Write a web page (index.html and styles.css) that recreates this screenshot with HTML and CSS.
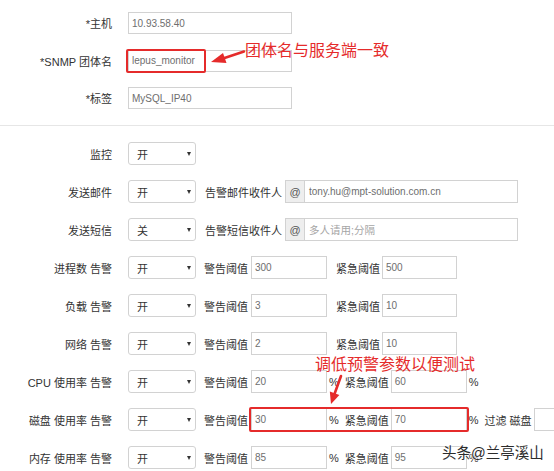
FILE: index.html
```html
<!DOCTYPE html>
<html lang="zh">
<head>
<meta charset="utf-8">
<title>SNMP 主机配置</title>
<link rel="stylesheet" href="styles.css">
</head>
<body>
<div class="page">
  <section class="basic">
    <div class="row">
      <div class="lbl">*主机</div>
      <div class="input w164">10.93.58.40</div>
    </div>
    <div class="row">
      <div class="lbl">*SNMP 团体名</div>
      <div class="input w164">lepus_monitor</div>
    </div>
    <div class="row">
      <div class="lbl">*标签</div>
      <div class="input w164">MySQL_IP40</div>
    </div>
  </section>

  <div class="sep"></div>

  <section class="alarms">
    <div class="row r">
      <div class="lbl">监控</div>
      <div class="select"><span>开</span><i class="caret"></i></div>
    </div>
    <div class="row r">
      <div class="lbl">发送邮件</div>
      <div class="select"><span>开</span><i class="caret"></i></div>
      <div class="sub mail">告警邮件收件人</div>
      <div class="addon">@</div>
      <div class="input wmail joined">tony.hu@mpt-solution.com.cn</div>
    </div>
    <div class="row r">
      <div class="lbl">发送短信</div>
      <div class="select"><span>关</span><i class="caret"></i></div>
      <div class="sub mail">告警短信收件人</div>
      <div class="addon">@</div>
      <div class="input wmail joined ph">多人请用;分隔</div>
    </div>
    <div class="row r">
      <div class="lbl">进程数 告警</div>
      <div class="select"><span>开</span><i class="caret"></i></div>
      <div class="sub warn">警告阈值</div>
      <div class="input w76">300</div>
      <div class="sub crit">紧急阈值</div>
      <div class="input w75">500</div>
    </div>
    <div class="row r">
      <div class="lbl">负载 告警</div>
      <div class="select"><span>开</span><i class="caret"></i></div>
      <div class="sub warn">警告阈值</div>
      <div class="input w76">3</div>
      <div class="sub crit">紧急阈值</div>
      <div class="input w75">10</div>
    </div>
    <div class="row r">
      <div class="lbl">网络 告警</div>
      <div class="select"><span>开</span><i class="caret"></i></div>
      <div class="sub warn">警告阈值</div>
      <div class="input w76">2</div>
      <div class="sub crit">紧急阈值</div>
      <div class="input w75">10</div>
    </div>
    <div class="row r">
      <div class="lbl">CPU 使用率 告警</div>
      <div class="select"><span>开</span><i class="caret"></i></div>
      <div class="sub warn">警告阈值</div>
      <div class="input w76">20</div>
      <div class="pct">%</div>
      <div class="sub crit2">紧急阈值</div>
      <div class="input w76">60</div>
      <div class="pct">%</div>
    </div>
    <div class="row r">
      <div class="lbl">磁盘 使用率 告警</div>
      <div class="select"><span>开</span><i class="caret"></i></div>
      <div class="sub warn">警告阈值</div>
      <div class="input w76">30</div>
      <div class="pct">%</div>
      <div class="sub crit2">紧急阈值</div>
      <div class="input w76">70</div>
      <div class="pct">%</div>
      <div class="sub filter">过滤 磁盘</div>
      <div class="input wrest"></div>
    </div>
    <div class="row r">
      <div class="lbl">内存 使用率 告警</div>
      <div class="select"><span>开</span><i class="caret"></i></div>
      <div class="sub warn">警告阈值</div>
      <div class="input w76">85</div>
      <div class="pct">%</div>
      <div class="sub crit2">紧急阈值</div>
      <div class="input w76">95</div>
      <div class="pct">%</div>
    </div>
  </section>

  <div class="mark box-snmp"></div>
  <div class="mark box-disk"></div>
  <div class="note note-snmp">团体名与服务端一致</div>
  <div class="note note-cpu">调低预警参数以便测试</div>
  <svg class="arrows" width="554" height="471" viewBox="0 0 554 471">
    <line x1="244" y1="51.5" x2="223" y2="58.5" stroke="#e52b2b" stroke-width="2.6" stroke-linecap="round"/>
    <polygon points="211,62 223,53 226.5,63" fill="#e52b2b"/>
    <line x1="341" y1="376" x2="334.5" y2="394" stroke="#e52b2b" stroke-width="2.6" stroke-linecap="round"/>
    <polygon points="331,404 329.8,391.6 339.4,395" fill="#e52b2b"/>
  </svg>
  <div class="watermark">头条@兰亭溪山</div>
</div>
</body>
</html>
```

FILE: styles.css
```css
body {
  margin: 0;
  background: #fff;
  font-family: "Liberation Sans", "Noto Sans CJK SC", sans-serif;
  font-size: 11px;
  color: #333;
}

.page {
  position: relative;
  width: 554px;
  height: 471px;
  overflow: hidden;
}

.basic {
  padding-top: 12px;
  display: flex;
  flex-direction: column;
  gap: 15.5px;
}

.row {
  display: flex;
  align-items: center;
  height: 22px;
}

.row.r {
  height: 23px;
}

.lbl {
  flex: none;
  width: 112px;
  margin-right: 16px;
  text-align: right;
  white-space: nowrap;
  color: #333;
}

.input {
  flex: none;
  box-sizing: border-box;
  height: 100%;
  border: 1px solid #d2d2d2;
  padding: 0 3px;
  display: flex;
  align-items: center;
  font-size: 10px;
  color: #6e6e6e;
  white-space: nowrap;
  overflow: hidden;
}

.input.ph {
  color: #a5a5a5;
  font-size: 10.5px;
}

.w164 { width: 164px; }
.w76 { width: 76px; }
.w75 { width: 75px; }
.wmail { width: 213px; }
.wrest { width: 40px; }

.input.joined {
  border-left: none;
  padding-left: 4px;
}

.sep {
  margin-top: 16px;
  border-top: 1px solid #e6e6e6;
}

.alarms {
  padding-top: 16px;
  display: flex;
  flex-direction: column;
  gap: 15px;
}

.select {
  flex: none;
  box-sizing: border-box;
  width: 68px;
  height: 100%;
  border: 1px solid #d2d2d2;
  border-radius: 3px;
  padding: 0 4px 0 8px;
  display: flex;
  align-items: center;
  justify-content: space-between;
  color: #333;
}

.caret {
  width: 0;
  height: 0;
  border-left: 2.5px solid transparent;
  border-right: 2.5px solid transparent;
  border-top: 4px solid #333;
}

.sub {
  flex: none;
  white-space: nowrap;
  color: #333;
}

.sub.mail {
  margin-left: 9px;
  margin-right: 3px;
}

.sub.warn {
  margin-left: 8px;
  margin-right: 3px;
}

.sub.crit {
  margin-left: 9px;
  margin-right: 2px;
}

.sub.crit2 {
  margin-left: 6px;
  margin-right: 2px;
}

.sub.filter {
  margin-left: 6px;
  margin-right: 2px;
}

.pct {
  flex: none;
  margin-left: 2px;
  color: #333;
}

.addon {
  flex: none;
  box-sizing: border-box;
  width: 20px;
  height: 100%;
  border: 1px solid #d2d2d2;
  background: #eee;
  display: flex;
  align-items: center;
  justify-content: center;
  color: #555;
  font-size: 11px;
}

.mark {
  position: absolute;
  box-sizing: border-box;
  border: 2px solid #e52b2b;
  border-radius: 2px;
}

.box-snmp {
  left: 126px;
  top: 49px;
  width: 80px;
  height: 24px;
}

.box-disk {
  left: 249px;
  top: 407px;
  width: 220px;
  height: 25px;
}

.note {
  position: absolute;
  font-family: "Noto Sans CJK SC", sans-serif;
  font-size: 16px;
  line-height: 16px;
  color: #e52b2b;
  white-space: nowrap;
}

.note-snmp {
  left: 245px;
  top: 41px;
}

.note-cpu {
  left: 315px;
  top: 355px;
}

.arrows {
  position: absolute;
  left: 0;
  top: 0;
  pointer-events: none;
}

.watermark {
  position: absolute;
  left: 442px;
  top: 444px;
  font-family: "Liberation Sans", "Noto Sans CJK SC", sans-serif;
  font-size: 14.5px;
  line-height: 18px;
  color: #2b2b2b;
  white-space: nowrap;
  text-shadow: 0 0 2px #fff, 0 0 2px #fff;
}
```
